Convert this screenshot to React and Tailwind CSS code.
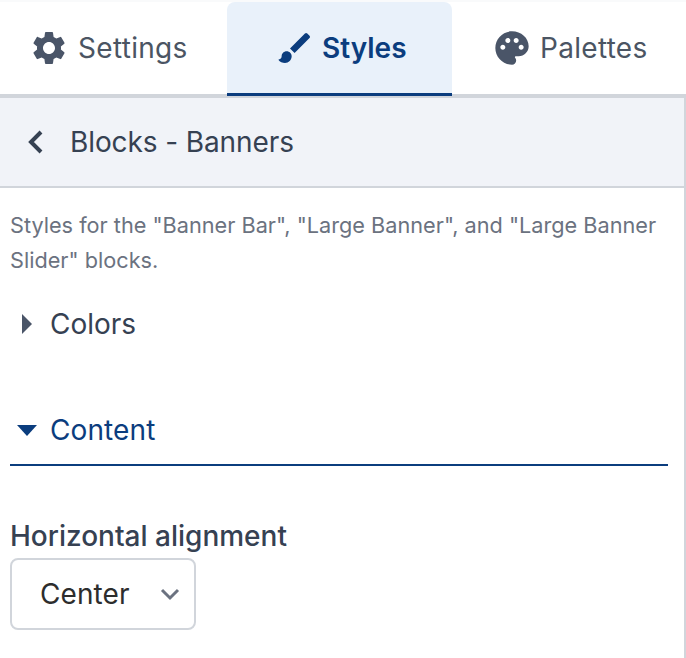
import React from "react";
import { MdSettings, MdBrush, MdPalette } from "react-icons/md";

function Tab({ icon, label, className }) {
  return (
    <div className={"flex items-center " + className}>
      {icon}
      <span>{label}</span>
    </div>
  );
}

export default function App() {
  return (
    <div className="w-[686px] h-[658px] bg-white overflow-hidden font-['Inter',sans-serif] text-[28px] leading-[32px]">
      <div className="h-[2px] bg-[#f9fafb]" />
      <div className="flex h-[96px] border-b-[4px] border-[#d1d5db]">
        <Tab
          className="w-[227px] h-[92px] pl-[29px] gap-[9px] tracking-[0.3px] text-[#4b5563]"
          label="Settings"
          icon={<MdSettings className="w-[40px] h-[40px] text-[#4a5568]" />}
        />
        <Tab
          className="w-[225px] h-[94px] pl-[48px] gap-[7px] relative bg-[#e9f1fa] text-[#0b3d7e] font-semibold rounded-t-[8px] border-b-[3px] border-[#0b3d7e]"
          label="Styles"
          icon={<MdBrush className="w-[40px] h-[40px] text-[#0b3d7e]" />}
        />
        <Tab
          className="w-[234px] h-[92px] pl-[40px] gap-[8px] tracking-[0.3px] text-[#4b5563]"
          label="Palettes"
          icon={<MdPalette className="w-[40px] h-[40px] text-[#4a5568]" />}
        />
      </div>
      <div className="border-r-[2px] border-[#d1d5db] h-[560px]">
        <div className="flex items-center h-[90px] bg-[#f1f3f8] border-b-[2px] border-[#d1d5db] pl-[26px] text-[#364152]">
          <svg className="w-[18px] h-[26px]" viewBox="0 0 18 26" fill="none">
            <path d="M15 3L5 13L15 23" stroke="#364152" strokeWidth="4" />
          </svg>
          <span className="ml-[26px] tracking-[-0.1px]">Blocks - Banners</span>
        </div>
        <p className="mt-[20px] mx-[10px] text-[21.7px] leading-[35px] text-[#6b7280] w-[660px]">
          Styles for the "Banner Bar", "Large Banner", and "Large Banner Slider" blocks.
        </p>
        <div className="flex items-center h-[32px] mt-[30px] text-[#364152]">
          <svg className="ml-[22px] w-[10px] h-[20px]" viewBox="0 0 10 20">
            <path d="M0 0L10 10L0 20Z" fill="#4a5568" />
          </svg>
          <span className="ml-[18px]">Colors</span>
        </div>
        <div className="ml-[10px] w-[658px] mt-[74px] border-b-[2px] border-[#0b3d7e] h-[52px] text-[#0b3d7e]">
          <div className="flex items-center h-[32px]">
            <svg className="ml-[7px] w-[20px] h-[11px]" viewBox="0 0 20 11">
              <path d="M0 0H20L10 11Z" fill="#0b3d7e" />
            </svg>
            <span className="ml-[13px] tracking-[0.1px]">Content</span>
          </div>
        </div>
        <div className="mx-[10px] mt-[54px] text-[#364152] font-medium">Horizontal alignment</div>
        <div className="mx-[10px] mt-[6px] w-[186px] h-[72px] border-[2px] border-[#d1d5db] rounded-[8px] flex items-center justify-between text-[#2d2d2d] pl-[28px] pr-[14px]">
          <span className="tracking-[0.1px]">Center</span>
          <svg className="w-[20px] h-[14px]" viewBox="0 0 20 14" fill="none">
            <path d="M2 3L10 11L18 3" stroke="#6b7280" strokeWidth="3" />
          </svg>
        </div>
      </div>
    </div>
  );
}
